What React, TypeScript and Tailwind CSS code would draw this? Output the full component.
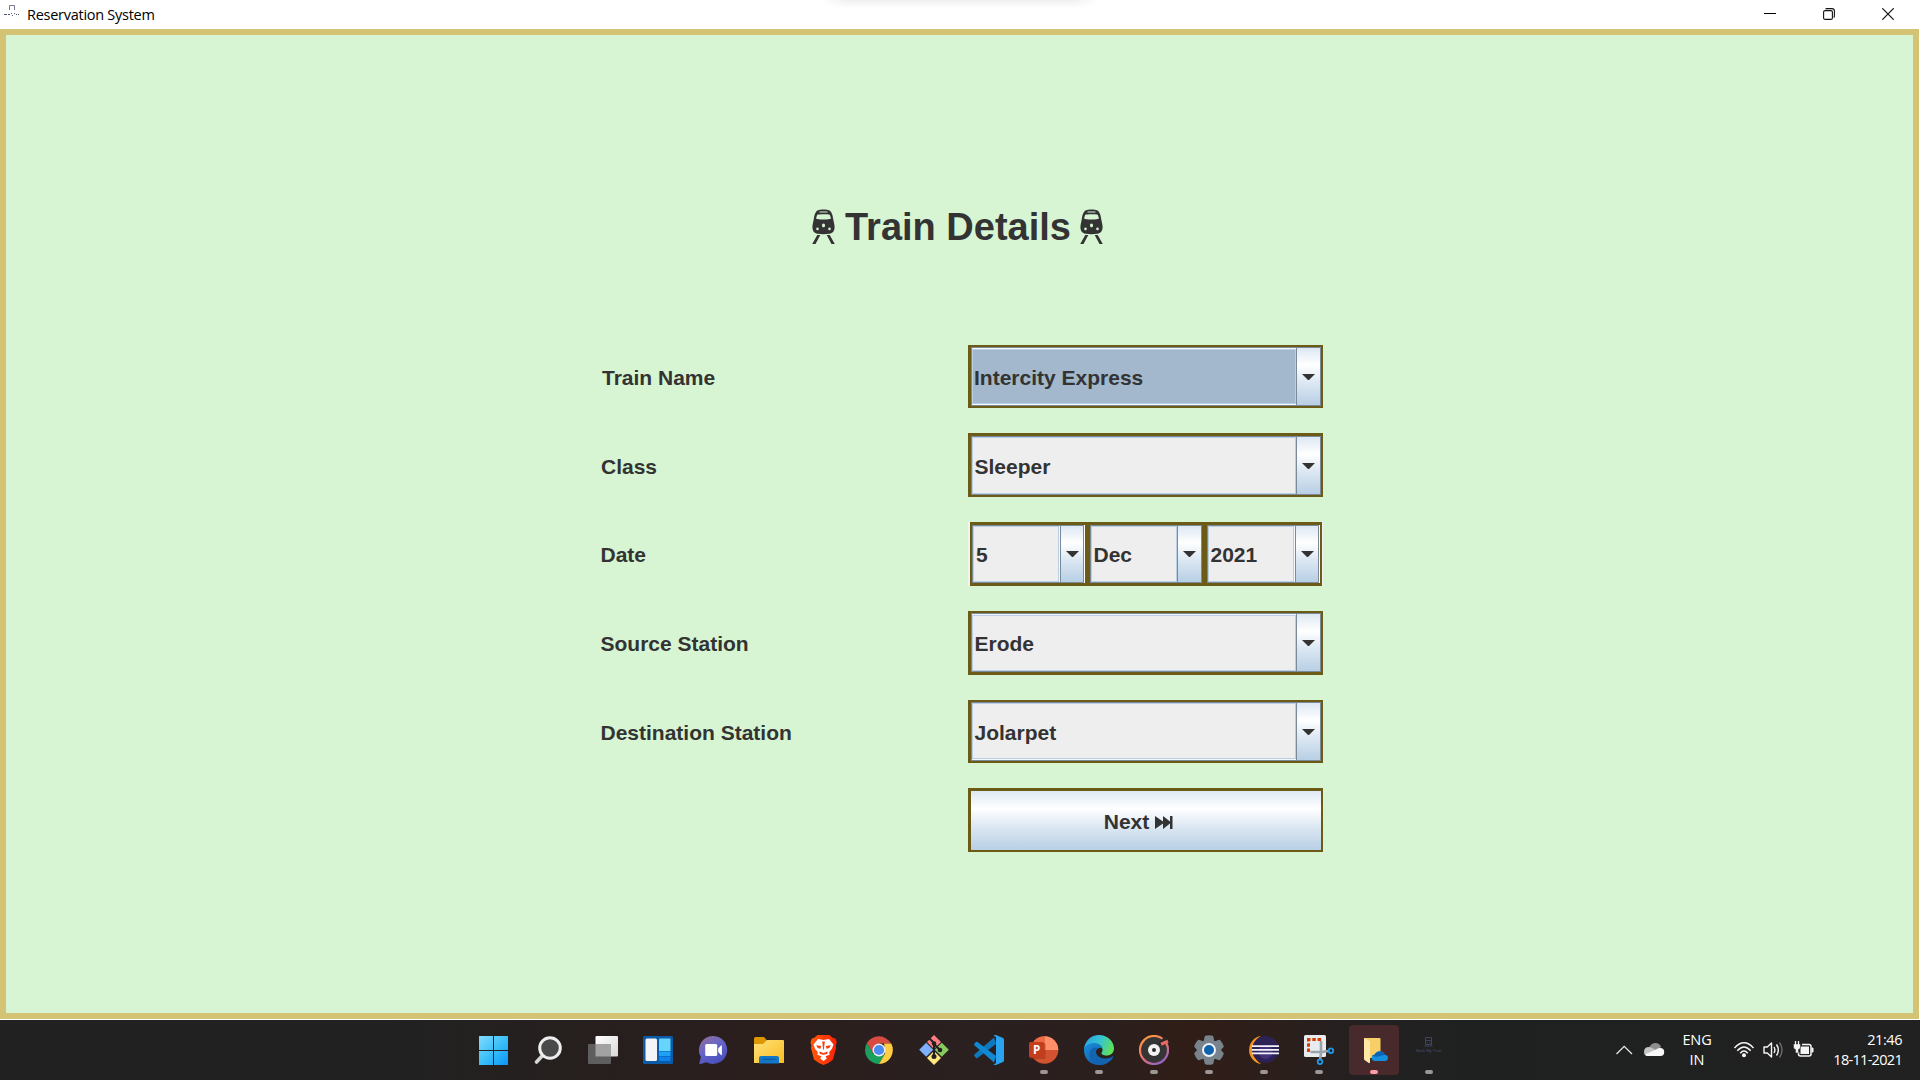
import type { ReactNode } from "react";

const OCEAN =
  "bg-[linear-gradient(to_bottom,#dde8f3_0%,#ffffff_30%,#dde8f3_60%,#b8cfe5_100%)]";

function TrainIcon() {
  return (
    <svg className="h-[35px] w-[23px]" viewBox="0 0 23 35" fill="#333333">
      <path
        fillRule="evenodd"
        d="M6 1.3C7.600.3 15.400.3 17 1.300c2.600 1.500 3.500 4 4.200 8.700l1.300 6.500c.5 5-1.300 7.500-5 8.300-3.900.6-8.100.6-12 0-3.700-.8-5.500-3.300-5-8.300L1.800 10C2.500 5.300 3.400 2.800 6 1.300ZM7.500 2.600v.8h8v-.8ZM5.200 5.800 4 9.600c1.500.8 3.500 1 7.500 1s6-.2 7.500-1l-1.200-3.800C16 5.100 7 5.100 5.200 5.800ZM11.500 14.600c-1 0-1.500.8-1.500 1.800s.5 1.800 1.500 1.800 1.500-.8 1.500-1.800-.5-1.800-1.500-1.800ZM5.500 18.600a1.300 1.300 0 1 0 0 2.600 1.300 1.300 0 0 0 0-2.600Zm12 0a1.300 1.300 0 1 0 0 2.600 1.300 1.300 0 0 0 0-2.600Z"
      />
      <path d="M5.300 26h3L3.500 35H.2ZM14.700 26h3l5.100 9h-3.300Z" />
    </svg>
  );
}

function Arrow() {
  return (
    <svg className="h-[6px] w-[13px]" viewBox="0 0 13 6" fill="#333333">
      <path d="M0 0h13L7 6H6Z" />
    </svg>
  );
}

type ComboProps = {
  value: string;
  frame: string;
  face?: string;
  button?: string;
  text?: string;
};

function Combo({
  value,
  frame,
  face = "bg-[#eeeeee]",
  button = "w-[25px]",
  text = "pl-[1.500px] pt-[3px]",
}: ComboProps) {
  return (
    <div className={`flex min-w-0 border-[#6b5b16] bg-white ${frame}`}>
      <div className="flex min-w-0 flex-1 border-y border-l border-[#7a8a99] bg-[#f4f7fb]">
        <div className={`flex min-w-0 flex-1 items-center border border-[#b8cfe5] ${face}`}>
          <span className={`whitespace-nowrap ${text}`}>{value}</span>
        </div>
      </div>
      <div
        className={`flex shrink-0 items-center justify-center border border-[#7a8a99] ${button} ${OCEAN}`}
      >
        <Arrow />
      </div>
    </div>
  );
}

function Row({ label, height, pad, children }: { label: string; height: string; pad: string; children: ReactNode }) {
  return (
    <div className={`flex ${height}`}>
      <div className={`flex w-[368px] shrink-0 items-center ${pad}`}>{label}</div>
      <div className="flex w-[355px]">{children}</div>
    </div>
  );
}

function Slot({ children, running, active }: { children: ReactNode; running?: boolean; active?: boolean }) {
  return (
    <div className="flex w-[55px] pl-[3px] pt-[5px]">
      <div
        className={`flex h-[50px] w-[50px] flex-col items-center rounded-[4px] ${active ? "bg-[#482a2c]" : ""}`}
      >
        <div className="flex h-[45px] items-center pt-[5px]">{children}</div>
        {running && (
          <div className={`h-[4px] w-[8px] rounded-full ${active ? "bg-[#ff99a4]" : "bg-[#9c9796]"}`} />
        )}
      </div>
    </div>
  );
}

const ico = "h-[30px] w-[30px]";
const icoLeft = "-ml-[2px] h-[30px] w-[30px]";

function WindowsIcon() {
  return (
    <svg className={icoLeft} viewBox="0 0 30 30">
      <defs>
        <linearGradient id="win" x1="0" y1="0" x2="1" y2="1">
          <stop offset="0" stopColor="#82dcff" />
          <stop offset=".5" stopColor="#3cc0f8" />
          <stop offset="1" stopColor="#0a94f8" />
        </linearGradient>
      </defs>
      <path fill="url(#win)" d="M1 1.500Q1 1 1.500 1H15V15H1ZM16 1H29.500q.5 0 .5.500V15H16ZM1 16H15V30H1.500q-.5 0-.5-.5ZM16 16h14V29.500q0 .5-.5.500H16Z" />
    </svg>
  );
}

function SearchIcon() {
  return (
    <svg className={icoLeft} viewBox="0 0 30 30">
      <path d="M10.500 19.500 3.500 27" stroke="#d6d6d6" strokeWidth="3.600" strokeLinecap="round" />
      <circle cx="17" cy="13" r="10.300" fill="#4a4a4a" stroke="#eeeeee" strokeWidth="3" />
    </svg>
  );
}

function TaskViewIcon() {
  return (
    <svg className={icoLeft} viewBox="0 0 30 30">
      <defs>
        <linearGradient id="tv" x1="0" y1="0" x2="1" y2="1">
          <stop offset="0" stopColor="#ffffff" />
          <stop offset="1" stopColor="#d8d8d8" />
        </linearGradient>
      </defs>
      <rect x="7.500" y="1" width="22.500" height="20.500" rx="1" fill="url(#tv)" />
      <rect x="0" y="9" width="23" height="20" rx="1" fill="#5e5e5e" />
      <path d="M7.500 9H22q1 0 1 1V21.500H7.500Z" fill="#a2a2a2" />
    </svg>
  );
}

function WidgetsIcon() {
  return (
    <svg className={icoLeft} viewBox="0 0 30 30">
      <rect x="0" y="1" width="30" height="28" rx="1.500" fill="#0b5ba8" />
      <rect x="2.500" y="3.500" width="11.500" height="22.500" rx="1.500" fill="#f5f5f7" />
      <path d="M16 4.500q0-1 1-1h9.500q1 0 1 1V16H16Z" fill="#67d4fb" />
      <path d="M16 16.500h11.500v4.500H16Z" fill="#1fa2f5" />
      <path d="M16 21.500h11.500V25q0 1-1 1H17q-1 0-1-1Z" fill="#0c82ea" />
    </svg>
  );
}

function ChatIcon() {
  return (
    <svg className={icoLeft} viewBox="0 0 30 30">
      <defs>
        <linearGradient id="chat" x1="0" y1="0" x2=".6" y2="1">
          <stop offset="0" stopColor="#9b7193" />
          <stop offset=".5" stopColor="#6665c8" />
          <stop offset="1" stopColor="#4b50bd" />
        </linearGradient>
      </defs>
      <path fill="url(#chat)" d="M15.500 1a14 14 0 1 1-7 26.300L2.500 29q-1.500.2-1-1.200L2.900 22A14 14 0 0 1 15.500 1Z" />
      <rect x="7.200" y="9" width="12" height="12" rx="1.500" fill="#fff" />
      <path d="M20.200 13.500 23 10.500q.9-.7.9.5v8.400q0 1.200-.9.500l-2.800-3Z" fill="#fff" />
    </svg>
  );
}

function ExplorerIcon() {
  return (
    <svg className={ico} viewBox="0 0 30 30">
      <defs>
        <linearGradient id="fold" x1="0" y1="0" x2="1" y2="1">
          <stop offset="0" stopColor="#ffe07a" />
          <stop offset="1" stopColor="#fabd20" />
        </linearGradient>
      </defs>
      <path d="M0 3.500Q0 2 1.500 2H10l3 3.500V9H0Z" fill="#dd9705" />
      <path d="M0 9h9l4-4h16q1 0 1 1v22H0Z" fill="url(#fold)" />
      <path d="M5 28.500V23q0-2 2-2h16q2 0 2 2v5.500Z" fill="#1377c8" />
      <path d="M8.500 24.200h13" stroke="#0c4f91" strokeWidth="1" />
    </svg>
  );
}

function BraveIcon() {
  return (
    <svg className={ico} viewBox="0 0 30 30">
      <defs>
        <linearGradient id="brave">
          <stop offset="0" stopColor="#ff5a0a" />
          <stop offset="1" stopColor="#fb2108" />
        </linearGradient>
      </defs>
      <path fill="url(#brave)" d="M8.500 0h12L24 3l2.500.5 1.300 4-1 2.500.3 3L24 24.500q-4 4-9.500 5.500Q9 28 5 24.500L2 13l.4-3-1-2.500 1.400-4L5 3Z" />
      <path fill="#fff" d="m9 4 5.500 1L20 4l4.500 5.500-1.600 4.500-2.700 3 .4 2.700-4 1.500 1.200 2.300-3.300 2.500-3.300-2.500 1.200-2.300-4-1.500.4-2.700-2.700-3L4.500 9.500Z" />
      <path fill="#fb3b08" d="m7.200 10.200 5 .9-.8 2.700-2.700-.9Zm14.600 0-5 .9.800 2.700 2.700-.9ZM10.300 16.500l4.200 1.500 4.200-1.500-.5 2.500-3.700.7-3.700-.7ZM13.200 6.500h2.600l-.6 5-.2 3h-1l-.2-3Z" />
    </svg>
  );
}

function ChromeIcon() {
  return (
    <svg className={ico} viewBox="0 0 30 30">
      <path fill="#d84b43" d="M2.900 8A14 14 0 0 1 27.100 8.600H15L8.900 18.500Z" />
      <path fill="#1a9f5c" d="M2.900 8a14 14 0 0 0 12.100 21l6-10.500H9Z" />
      <path fill="#fecd41" d="M27.300 8.600A14 14 0 0 1 15 29l6.100-10.500-1-9.900Z" />
      <circle cx="15" cy="15" r="6.500" fill="#f1f1f1" />
      <circle cx="15" cy="15" r="5.100" fill="#4a8bf4" />
    </svg>
  );
}

function GitIcon() {
  return (
    <svg className={ico} viewBox="0 0 30 30">
      <path fill="#ff7f84" d="m15 0 7 7-7 7-7-7Z" />
      <path fill="#7fb0ff" d="m7.200 7.800 7 7-7 7-7-7Z" />
      <path fill="#87cb5f" d="m22.800 7.800 7 7-7 7-7-7Z" />
      <path fill="#ffe680" d="m15 16 7 7-7 7-7-7Z" />
      <g stroke="#231f20" strokeWidth="2" fill="none">
        <path d="m10 3 5 5v13M15 9l6 6" />
      </g>
      <g fill="#231f20">
        <circle cx="15" cy="8.500" r="2.300" />
        <circle cx="21" cy="15" r="2.300" />
        <circle cx="15" cy="21.500" r="2.500" />
      </g>
    </svg>
  );
}

function VsCodeIcon() {
  return (
    <svg className={ico} viewBox="0 0 30 30">
      <path fill="#0e78bf" d="M.4 19.600 20 2.500 22 9 3.500 23q-.8.5-1.400 0L.5 21.300q-.6-.8-.1-1.700Z" />
      <path fill="#1288d3" d="M.4 10.300 20 27.500l2-6.500L3.500 7q-.8-.5-1.400 0L.5 8.600q-.6.800-.1 1.700Z" />
      <path fill="#2aa3f0" d="m22 0 7 3q1 .6 1 1.800v20.400q0 1.200-1 1.800l-7 3q-1.500.3-2.500-1 2.500 0 2.500-1.500V2.500Q22 1 19.500 1q1-1.200 2.500-1Z" />
    </svg>
  );
}

function PowerPointIcon() {
  return (
    <svg className={ico} viewBox="0 0 30 30">
      <circle cx="15.500" cy="15" r="13.800" fill="#d35230" />
      <path d="M15.500 15V1.200A13.800 13.800 0 0 1 29.300 15Z" fill="#ff8f6b" />
      <path d="M15.500 15V1.200A13.800 13.800 0 0 0 1.700 15Z" fill="#ed6c47" />
      <rect x="1" y="8" width="15.500" height="16" rx="1.500" fill="#9e2e16" opacity=".5" />
      <rect x="0" y="7" width="15" height="15.500" rx="1.500" fill="#c43e1c" />
      <text x="7.500" y="18.800" textAnchor="middle" fontFamily="Open Sans, sans-serif" fontWeight="700" fontSize="11.500" fill="#fff">P</text>
    </svg>
  );
}

function EdgeIcon() {
  return (
    <svg className={ico} viewBox="0 0 30 30">
      <defs>
        <linearGradient id="edgeTop" x1="0" y1=".3" x2="1" y2=".6">
          <stop offset="0" stopColor="#2aa5e5" />
          <stop offset=".5" stopColor="#35c5d0" />
          <stop offset="1" stopColor="#62e250" />
        </linearGradient>
        <linearGradient id="edgeBody" x1="0" y1="0" x2="1" y2="1">
          <stop offset="0" stopColor="#1b8fdb" />
          <stop offset="1" stopColor="#0c4da0" />
        </linearGradient>
      </defs>
      <path fill="url(#edgeBody)" d="M0 15c0-5 5-7.500 9-7.500 5 0 9 3 9 6-4-1.500-6 1-6 3.500 0 4.500 6 7.500 12 6.500 3-.6 5-3 5.400-2C26.500 27 21 30 15 30 6 30 0 23.500 0 15Z" />
      <path fill="#1264b0" d="M5.500 18C6 14 9 12 13.500 13c-3.500 3-1.500 9.500 5 10.500 3 .5 6.500 0 10.900-2C27 27 21 30 16 30 9 30 5 24 5.500 18Z" />
      <path fill="url(#edgeTop)" d="M0 14.500C.5 6 7 0 15 0c9 0 15 6.500 15 13.500 0 4.500-3.500 7-7.500 7-3.500 0-5.500-1.500-5-2.700 2.500-2.500 1-9.300-7-9.800C5 7.800 1 11 0 14.500Z" />
    </svg>
  );
}

function GrooveIcon() {
  return (
    <svg className={ico} viewBox="0 0 30 30">
      <defs>
        <linearGradient id="groove" x1=".2" y1="0" x2=".8" y2="1">
          <stop offset="0" stopColor="#ff9a3c" />
          <stop offset=".5" stopColor="#f0736e" />
          <stop offset="1" stopColor="#8b62c9" />
        </linearGradient>
      </defs>
      <circle cx="15" cy="15" r="14" fill="#353535" stroke="url(#groove)" strokeWidth="2.200" />
      <path d="m21.500 10 6-7" stroke="#2c2624" strokeWidth="5" />
      <path d="m22 9.300 7-3" stroke="#e26b62" strokeWidth="3.200" />
      <circle cx="15" cy="15" r="6" fill="#f3f3f3" />
      <circle cx="15" cy="15" r="2" fill="#2b2b2b" />
    </svg>
  );
}

function SettingsIcon() {
  return (
    <svg className={ico} viewBox="0 0 30 30">
      <path
        fill="#78838c"
        d="M11.500 1.500q3.500-1 7 0l1 4.500 1.500 1 4.500-1.500q2.500 2.500 3.500 6L26 15l3 3.500q-1 3.500-3.500 6L21 23l-1.500 1-1 4.500q-3.500 1-7 0l-1-4.500L9 23l-4.500 1.500q-2.500-2.500-3.500-6L4 15 1 11.500q1-3.500 3.500-6L9 7l1.500-1Z"
        stroke="#78838c"
        strokeWidth="1.500"
        strokeLinejoin="round"
      />
      <circle cx="15" cy="15" r="6" fill="#0f62ae" stroke="#f1f3f5" strokeWidth="2" />
    </svg>
  );
}

function EclipseIcon() {
  return (
    <svg className={ico} viewBox="0 0 30 30">
      <path fill="#f7941e" d="M12 .8A14.300 14.300 0 0 0 12 29 16.500 16.500 0 0 1 12 .8Z" />
      <circle cx="16.500" cy="14.500" r="13.500" fill="#2c2255" />
      <circle cx="16.500" cy="17" r="7" fill="#43327a" />
      <path d="M3 11.200h27M3 14.800h27M3 18.300h27" stroke="#f4f2fa" strokeWidth="1.700" />
    </svg>
  );
}

function SnipIcon() {
  return (
    <svg className={ico} viewBox="0 0 30 30">
      <rect x="0" y="0" width="22" height="22" rx="1.500" fill="#e9ecef" />
      <path d="M3 4.500h15M4.500 3v14" stroke="#d83b01" strokeWidth="3" strokeDasharray="3.500 1.800" />
      <path d="M17 6v12l-1 7M6.500 17H18l6-1" stroke="#9aa3ab" strokeWidth="2.600" fill="none" strokeLinejoin="round" />
      <circle cx="27" cy="15.700" r="2.300" fill="none" stroke="#2196e3" strokeWidth="1.900" />
      <circle cx="16" cy="26.800" r="2.300" fill="none" stroke="#2196e3" strokeWidth="1.900" />
    </svg>
  );
}

function CloudFolderIcon() {
  return (
    <svg className={ico} viewBox="0 0 30 30">
      <path fill="#f7cf66" d="M5 3h15.500q1 0 1 1v19H9Z" />
      <path fill="#ffe9a6" d="m5 3 5 2.500q1 .5 1 1.500v20q0 1.500-1.300 1L5.500 25q-.5-.4-.5-1Z" />
      <path fill="#1490df" d="M16 26q-3 0-3.500-3 .2-2.700 3-3.200 2-4 6.500-3.500 3 .5 4 3.500 3 .5 3 3.300-.5 2.900-3 2.900Z" />
      <path fill="#0a63b5" d="M13 21q1-1.300 2.500-1.200 2-4 6.500-3.500 3 .5 4 3.500l-8 2Z" />
    </svg>
  );
}

function TravelAppIcon() {
  return (
    <div className="flex h-[30px] flex-col items-center pt-[2px]">
      <svg className="h-[10px] w-[9px]" viewBox="0 0 9 10" fill="none" stroke="#3d4663" strokeWidth="1">
        <path d="M1.500.5h6v7h-6ZM1.500 3.500h6M2 8l-1.300 2M7 8l1.300 2M2.500 9h4M3 5.600h1M5.500 5.600h1" />
      </svg>
      <span className="mt-[2px] whitespace-nowrap font-['Liberation_Sans'] text-[4px] leading-[4px] text-[#46506f]">
        Book My Train
      </span>
    </div>
  );
}

function Taskbar() {
  return (
    <footer className="flex h-[60px] bg-[linear-gradient(to_right,#202120_0%,#212121_20%,#271f1e_32%,#2b1e1d_41%,#2a2020_50%,#2b1f1d_58%,#301d17_62%,#2b1f1c_67%,#232021_71%,#1f2120_76%,#202120_100%)]">
      <div className="flex-1" />
      <div className="flex w-[990px] shrink-0">
        <Slot><WindowsIcon /></Slot>
        <Slot><SearchIcon /></Slot>
        <Slot><TaskViewIcon /></Slot>
        <Slot><WidgetsIcon /></Slot>
        <Slot><ChatIcon /></Slot>
        <Slot><ExplorerIcon /></Slot>
        <Slot><BraveIcon /></Slot>
        <Slot><ChromeIcon /></Slot>
        <Slot><GitIcon /></Slot>
        <Slot><VsCodeIcon /></Slot>
        <Slot running><PowerPointIcon /></Slot>
        <Slot running><EdgeIcon /></Slot>
        <Slot running><GrooveIcon /></Slot>
        <Slot running><SettingsIcon /></Slot>
        <Slot running><EclipseIcon /></Slot>
        <Slot running><SnipIcon /></Slot>
        <Slot running active><CloudFolderIcon /></Slot>
        <Slot running><TravelAppIcon /></Slot>
      </div>
      <div className="flex w-[464px] items-start font-['Open_Sans',sans-serif] text-[14.500px] leading-[20px] text-white">
        <svg className="ml-[159px] mt-[25px] h-[10px] w-[18px]" viewBox="0 0 18 10" fill="none" stroke="#e8e8e8" strokeWidth="1.300">
          <path d="m1.500 9 7.700-7.700L17 9" />
        </svg>
        <svg className="ml-[10px] mt-[22px] h-[15px] w-[22px]" viewBox="0 0 22 15">
          <path d="M6 6Q8 1 12.500 1q4 0 5.500 4l-5 5-7-1Z" fill="#8e8e8e" />
          <path d="M1 10Q1 5 6 5q2 0 4 1.500l5 3-8 4.500H5Q1 14 1 10Z" fill="#c4c4c4" />
          <path d="M2 12.500 14 7q1.500-1.500 4-1 3.200.7 3.200 4 0 4-3.700 4H5q-2 0-3-1.500Z" fill="#f7f7f7" />
        </svg>
        <div className="ml-[15px] mt-[10px] w-[34px] text-center tracking-[-0.1px]">
          <div>ENG</div>
          <div>IN</div>
        </div>
        <svg className="ml-[19px] mt-[21px] h-[17px] w-[22px]" viewBox="0 0 22 17" fill="none" stroke="#f5f5f5" strokeWidth="1.500">
          <path d="M1.500 7q9.500-10.500 19 0M4.300 9.700q6.700-7.500 13.400 0M7.200 12.200q3.800-4.200 7.600 0" />
          <circle cx="11" cy="14.300" r="1.300" fill="#f5f5f5" />
        </svg>
        <svg className="ml-[8px] mt-[21px] h-[18px] w-[21px]" viewBox="0 0 21 18" fill="none" stroke="#f5f5f5" strokeWidth="1.400">
          <path d="M1 6h3.300L8.500 2v14l-4.200-4H1Z" strokeLinejoin="round" />
          <path d="M11 6q1.800 3 0 6M13.500 3.500q3.700 5.500 0 11" />
          <path d="M16.500 1.500q5 7.500 0 15" stroke="#6b6b6b" />
        </svg>
        <svg className="ml-[9px] mt-[20px] h-[18px] w-[21px]" viewBox="0 0 21 18" fill="none" stroke="#f5f5f5">
          <path d="M9 4.500h7q2 0 2 2v7.500q0 2-2 2H7.500q-2 0-2-2V12" strokeWidth="1.500" />
          <rect x="7.500" y="6.500" width="8.500" height="7.500" fill="#f5f5f5" stroke="none" />
          <path d="M18.500 8h1.500v4h-1.500" fill="#f5f5f5" />
          <path d="M.5 4h7v3q0 2-2 2.500V13h-3V9.500Q.5 9 .5 7Z" fill="#f5f5f5" stroke="#202120" strokeWidth=".5" />
          <path d="M2.500 1v4M5.500 1v4" strokeWidth="1.300" />
        </svg>
        <div className="ml-auto mr-[18px] mt-[10px] text-right">
          <div className="tracking-[-0.450px]">21:46</div>
          <div className="tracking-[-0.700px]">18-11-2021</div>
        </div>
      </div>
    </footer>
  );
}

function TitleBar() {
  return (
    <header className="relative flex h-[29px] items-start bg-white">
      <svg className="ml-[4px] mt-[5px] h-[11px] w-[16px]" viewBox="0 0 16 11" fill="none" stroke="#53587a" strokeWidth="1">
        <path d="M5.500 5V.500h5V5" opacity=".8" />
        <path d="M0 9.500h3M4 9.500h2M7 8.500h1M8 10.500h1M10 8.500h1M12 9.500h1M14 9.500h1" />
      </svg>
      <span className="ml-[7px] mt-[5px] whitespace-nowrap font-['Open_Sans',sans-serif] text-[14.500px] leading-[20px] tracking-[-0.270px] text-black">
        Reservation System
      </span>
      <div className="absolute left-[820px] top-0 h-[8px] w-[280px] bg-[linear-gradient(to_bottom,#efefef,#ffffff)] [mask-image:linear-gradient(to_right,transparent,black_10%,black_90%,transparent)]" />
      <div className="ml-auto flex gap-[46px] pr-[26px] pt-[8px]">
        <svg className="mr-px h-[12px] w-[12px]" viewBox="0 0 12 12"><path d="M0 5h12v1H0Z" /></svg>
        <svg className="h-[12px] w-[12px]" viewBox="0 0 12 12" fill="none" stroke="#111" strokeWidth="1.100">
          <rect x=".6" y="2.600" width="8.800" height="8.800" rx="1.500" />
          <path d="M2.500 1.200Q3 .6 4 .6h5q2.400 0 2.400 2.400v5q0 1-.7 1.500" />
        </svg>
        <svg className="ml-px h-[12px] w-[12px]" viewBox="0 0 12 12" stroke="#111" strokeWidth="1.200">
          <path d="m.3.3 11.400 11.400M11.700.3.3 11.700" />
        </svg>
      </div>
    </header>
  );
}

export default function App() {
  return (
    <div className="flex h-[1080px] w-[1920px] flex-col overflow-hidden bg-white">
      <TitleBar />
      <main className="mr-px h-[990px] border-[6px] border-[#d4c374] bg-[#d7f5d3] font-['Liberation_Sans',Arial,sans-serif] font-bold text-[#333333]">
        <div className="ml-[806px] mt-[174px] flex h-[35px] items-start">
          <TrainIcon />
          <h1 className="ml-[10px] w-[235px] whitespace-nowrap text-[38px] leading-[36px]">Train Details</h1>
          <TrainIcon />
        </div>
        <div className="ml-[594px] mt-[101px] flex w-[723px] flex-col gap-[25px] text-[21px] leading-[24px]">
          <Row label="Train Name" height="h-[63px]" pad="pl-[2px] pt-[3px]">
            <Combo value="Intercity Express" frame="flex-1 border-y-2 border-l-[3px] border-r-2" face="my-px bg-[#a3b8cc]" text="pl-px pt-[3px]" />
          </Row>
          <Row label="Class" height="h-[64px]" pad="pl-px pt-[4px]">
            <Combo value="Sleeper" frame="flex-1 border-b-2 border-l-[3px] border-r-2 border-t-[3px]" />
          </Row>
          <Row label="Date" height="h-[64px]" pad="pl-[0.500px] pt-[2px]">
            <div className="flex flex-1 border-x border-l-2 border-[#f0f3ee] bg-[#6b5b16]">
              <Combo value="5" frame="w-[115px] border-y-[3px] border-l-2" face="mr-px bg-[#eeeeee]" button="mr-px w-[24px]" text="pl-[2px] pt-[2px]" />
              <Combo value="Dec" frame="w-[117px] border-y-[3px] border-l-[5px]" text="pl-[1.500px] pt-[2px]" />
              <Combo value="2021" frame="w-[120px] border-y-[3px] border-l-[5px] border-r-2" face="mr-px bg-[#eeeeee]" button="mr-px w-[24px]" text="pl-[1.500px] pt-[2px]" />
            </div>
          </Row>
          <Row label="Source Station" height="h-[64px]" pad="pl-[0.500px] pt-[2px]">
            <Combo value="Erode" frame="flex-1 border-b-[3px] border-l-[3px] border-r-2 border-t-2" face="mt-px bg-[#eeeeee]" text="pl-[1.500px] pt-[2px]" />
          </Row>
          <Row label="Destination Station" height="h-[63px]" pad="pl-[0.500px] pt-[3px]">
            <Combo value="Jolarpet" frame="flex-1 border-y-2 border-l-[3px] border-r-2" face="mb-px bg-[#eeeeee]" text="pl-[1.500px] pt-[4px]" />
          </Row>
          <Row label="" height="h-[64px]" pad="">
            <button className={`flex flex-1 items-center justify-center border-b-2 border-l-[3px] border-r-2 border-t-[3px] border-[#6b5b16] pr-[15px] pt-[3px] font-bold ${OCEAN}`}>
              Next
              <svg className="ml-[6px] mt-px h-[13px] w-[18px]" viewBox="0 0 18 13" fill="#333333">
                <path d="M0 0 8 5.500V0l7 5.500V0h2.500v13H15V7.500L8 13V7.500L0 13Z" />
              </svg>
            </button>
          </Row>
        </div>
      </main>
      <div className="h-px shrink-0 bg-white" />
      <Taskbar />
    </div>
  );
}
